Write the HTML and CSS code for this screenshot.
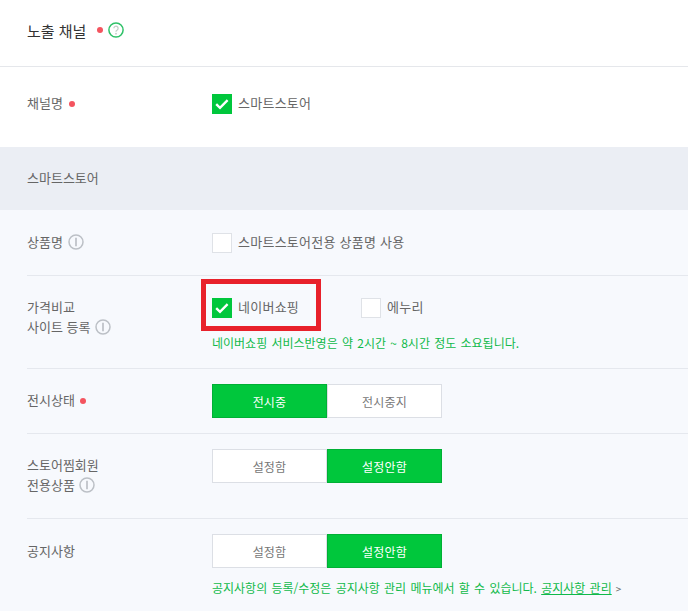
FILE: index.html
```html
<!DOCTYPE html>
<html lang="ko">
<head>
    <meta charset="UTF-8">
    <title>노출 채널</title>
    <link rel="stylesheet" href="styles.css">
</head>
<body>
    <header class="titulo">
        <h2>노출 채널</h2>
        <span class="ponto ponto-titulo"></span>
        <svg class="ajuda" width="16" height="16" viewBox="0 0 16 16">
            <circle cx="8" cy="8" r="7.1" fill="#fff" stroke="#2fc168" stroke-width="1.5"/>
            <path d="M5.9 6.3a2.1 2.1 0 1 1 3.3 1.7c-.8.5-1.2.9-1.2 1.8" fill="none" stroke="#c4cfc8" stroke-width="1.3"/>
            <circle cx="8" cy="11.7" r=".9" fill="#c4cfc8"/>
        </svg>
    </header>

    <section class="canal">
        <div class="rotulo">채널명 <span class="ponto"></span></div>
        <label class="check">
            <span class="caixa marcada"><svg width="20" height="20" viewBox="0 0 20 20"><path d="M4.2 10.2l3.8 3.6 7.6-7.6" fill="none" stroke="#fff" stroke-width="2.4"/></svg></span>
            스마트스토어
        </label>
    </section>

    <div class="faixa">스마트스토어</div>

    <section class="grupo">
        <div class="linha linha-produto">
            <div class="rotulo">상품명
                <svg class="info" width="16" height="16" viewBox="0 0 16 16"><circle cx="8" cy="8" r="7" fill="none" stroke="#bcc0c6" stroke-width="1.5"/><path d="M8 3.8v8.4" stroke="#bcc0c6" stroke-width="1.7"/></svg>
            </div>
            <label class="check"><span class="caixa"></span>스마트스토어전용 상품명 사용</label>
        </div>

        <div class="linha linha-preco">
            <div class="rotulo">가격비교<br>사이트 등록
                <svg class="info" width="16" height="16" viewBox="0 0 16 16"><circle cx="8" cy="8" r="7" fill="none" stroke="#bcc0c6" stroke-width="1.5"/><path d="M8 3.8v8.4" stroke="#bcc0c6" stroke-width="1.7"/></svg>
            </div>
            <div class="valor">
                <div class="opcoes">
                    <label class="check destaque">
                        <span class="caixa marcada"><svg width="20" height="20" viewBox="0 0 20 20"><path d="M4.2 10.2l3.8 3.6 7.6-7.6" fill="none" stroke="#fff" stroke-width="2.4"/></svg></span>
                        네이버쇼핑
                        <span class="marca-vermelha"></span>
                    </label>
                    <label class="check"><span class="caixa"></span>에누리</label>
                </div>
                <p class="dica">네이버쇼핑 서비스반영은 약 2시간 ~ 8시간 정도 소요됩니다.</p>
            </div>
        </div>

        <div class="linha linha-status">
            <div class="rotulo">전시상태 <span class="ponto"></span></div>
            <div class="botoes">
                <button class="ativo">전시중</button>
                <button>전시중지</button>
            </div>
        </div>

        <div class="linha linha-membro">
            <div class="rotulo">스토어찜회원<br>전용상품
                <svg class="info" width="16" height="16" viewBox="0 0 16 16"><circle cx="8" cy="8" r="7" fill="none" stroke="#bcc0c6" stroke-width="1.5"/><path d="M8 3.8v8.4" stroke="#bcc0c6" stroke-width="1.7"/></svg>
            </div>
            <div class="botoes">
                <button>설정함</button>
                <button class="ativo">설정안함</button>
            </div>
        </div>

        <div class="linha linha-aviso">
            <div class="rotulo">공지사항</div>
            <div class="valor">
                <div class="botoes">
                    <button>설정함</button>
                    <button class="ativo">설정안함</button>
                </div>
                <p class="dica">공지사항의 등록/수정은 공지사항 관리 메뉴에서 할 수 있습니다. <a href="#">공지사항 관리</a><span class="seta">&gt;</span></p>
            </div>
        </div>
    </section>
</body>
</html>
```

FILE: styles.css
```css
body {
    margin: 0;
    height: 611px;
    overflow: hidden;
    background-color: #f7f9fd;
    color: #666;
    font-family: "Noto Sans CJK KR", "Noto Sans", sans-serif;
    font-size: 13px;
}

.titulo {
    height: 60px;
    padding: 0 27px 6px 27px;
    display: flex;
    align-items: center;
    background-color: #fff;
    border-bottom: 1px solid #e5e7eb;
}

.titulo h2 {
    margin: 0;
    font-size: 15px;
    font-weight: 400;
    color: #333;
}

.ponto {
    display: inline-block;
    width: 6px;
    height: 6px;
    border-radius: 50%;
    background-color: #f4545f;
    vertical-align: 1px;
    margin-left: 2px;
}

.ponto-titulo {
    margin: 0 5px 0 11px;
}

.canal {
    height: 80px;
    display: flex;
    align-items: flex-start;
    padding: 27px 0 0 27px;
    box-sizing: border-box;
    background-color: #fff;
}

.canal .rotulo {
    margin-top: -1px;
}

.rotulo {
    width: 185px;
    flex-shrink: 0;
    line-height: 20px;
}

.faixa {
    height: 63px;
    line-height: 62px;
    padding-left: 27px;
    background-color: #ebeef4;
}

.grupo {
    padding-left: 27px;
}

.linha {
    display: flex;
    align-items: flex-start;
    height: 65px;
    padding-top: 15px;
    box-sizing: border-box;
    border-top: 1px solid #e5e8ee;
}

.linha-produto {
    border-top: 0;
    padding-top: 23px;
}

.linha-produto .rotulo,
.linha-preco .rotulo {
    margin-top: -1px;
}

.linha-preco {
    height: 93px;
    padding-top: 22px;
}

.linha-status .rotulo {
    padding-top: 6px;
}

.linha-membro {
    height: 85px;
}

.linha-membro .rotulo {
    padding-top: 6px;
}

.linha-aviso {
    height: 92px;
}

.linha-aviso .rotulo {
    padding-top: 7px;
}

.check {
    display: flex;
    align-items: flex-start;
    height: 20px;
    line-height: 18px;
    letter-spacing: .25px;
    position: relative;
}

.caixa {
    width: 20px;
    height: 20px;
    margin-right: 6px;
    box-sizing: border-box;
    background-color: #fff;
    border: 1px solid #dfe2e7;
    flex-shrink: 0;
}

.caixa.marcada {
    background-color: #00c73c;
    border: 0;
}

.caixa svg {
    display: block;
}

.opcoes {
    display: flex;
    gap: 61px;
}

.destaque {
    width: 88px;
}

/* marca vermelha por cima do conteudo */
.marca-vermelha {
    position: absolute;
    left: -11px;
    top: -19px;
    width: 120px;
    height: 52px;
    box-sizing: border-box;
    border: 5px solid #e8212b;
}

.dica {
    margin: 16px 0 0 0;
    font-size: 12px;
    line-height: 18px;
    word-spacing: .9px;
    color: #10b94a;
    white-space: nowrap;
}

.linha-aviso .dica {
    margin-top: 11px;
}

.dica a {
    color: #10b94a;
}

.seta {
    color: #666;
    font-size: 10px;
    margin-left: 4px;
}

.botoes {
    display: flex;
}

.botoes button {
    width: 115px;
    height: 34px;
    padding: 0;
    font-family: inherit;
    font-size: 12px;
    letter-spacing: .2px;
    color: #777;
    background-color: #fff;
    border: 1px solid #dcdfe5;
}

.botoes button.ativo {
    color: #fff;
    background-color: #00c73c;
    border-color: #00b035;
}

.info {
    vertical-align: -3px;
    margin-left: 1px;
}
```
